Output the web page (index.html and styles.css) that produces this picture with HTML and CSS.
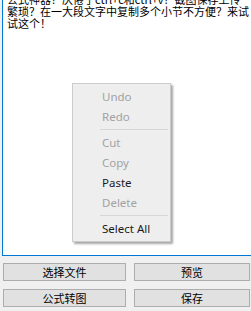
FILE: index.html
```html
<!DOCTYPE html>
<html>
<head>
<meta charset="utf-8">
<link rel="stylesheet" href="styles.css">
</head>
<body>
<div class="window">
  <div class="editor">
    <div class="text">
      <div class="line">公式神器？厌倦了ctrl+c和ctrl+v？截图保存上传</div>
      <div class="line">繁琐？在一大段文字中复制多个小节不方便？来试</div>
      <div class="line">试这个！</div>
    </div>
  </div>
  <div class="buttons">
    <div class="btn">选择文件</div>
    <div class="btn">预览</div>
    <div class="btn">公式转图</div>
    <div class="btn">保存</div>
  </div>
  <div class="menu">
    <div class="item disabled">Undo</div>
    <div class="item disabled">Redo</div>
    <div class="sep"></div>
    <div class="item disabled">Cut</div>
    <div class="item disabled">Copy</div>
    <div class="item">Paste</div>
    <div class="item disabled">Delete</div>
    <div class="sep"></div>
    <div class="item">Select All</div>
  </div>
</div>
</body>
</html>
```
FILE: styles.css
```css
html, body {
  margin: 0;
  padding: 0;
  background: #f0f0f0;
}
.window {
  position: relative;
  width: 251px;
  height: 311px;
  overflow: hidden;
}
.editor {
  margin-left: 2px;
  height: 255px;
  background: #ffffff;
  border-left: 1px solid #0078d7;
  border-bottom: 1px solid #0078d7;
  overflow: hidden;
}
.text {
  margin-top: -7px;
  padding-left: 4px;
  font-family: "Noto Sans CJK SC", sans-serif;
  font-size: 11px;
  line-height: 12px;
  color: #000;
}
.line {
  white-space: nowrap;
  height: 12px;
}
.buttons {
  display: grid;
  grid-template-columns: 123px 116px;
  column-gap: 8px;
  row-gap: 8px;
  padding: 7px 0 0 3px;
}
.btn {
  height: 16px;
  background: #e1e1e1;
  border: 1px solid #adadad;
  font-family: "Noto Sans CJK SC", sans-serif;
  font-size: 11px;
  line-height: 16px;
  text-align: center;
  color: #000;
}
.menu {
  position: absolute;
  left: 72px;
  top: 83px;
  width: 99px;
  height: 159px;
  background: #eeeeee;
  border: 1px solid #cccccc;
  box-shadow: 2px 2px 2px rgba(0,0,0,0.35);
  padding-top: 3px;
  box-sizing: border-box;
  font-family: "Noto Sans", sans-serif;
  font-size: 11.5px;
}
.item {
  height: 20px;
  line-height: 20px;
  padding-left: 29px;
  color: #1a1a1a;
}
.item.disabled {
  color: #a2a2a2;
}
.sep {
  height: 1px;
  background: #d7d7d7;
  margin: 2px 2px 3px 27px;
}
.sep:last-of-type {
  margin-bottom: 4px;
}
```
